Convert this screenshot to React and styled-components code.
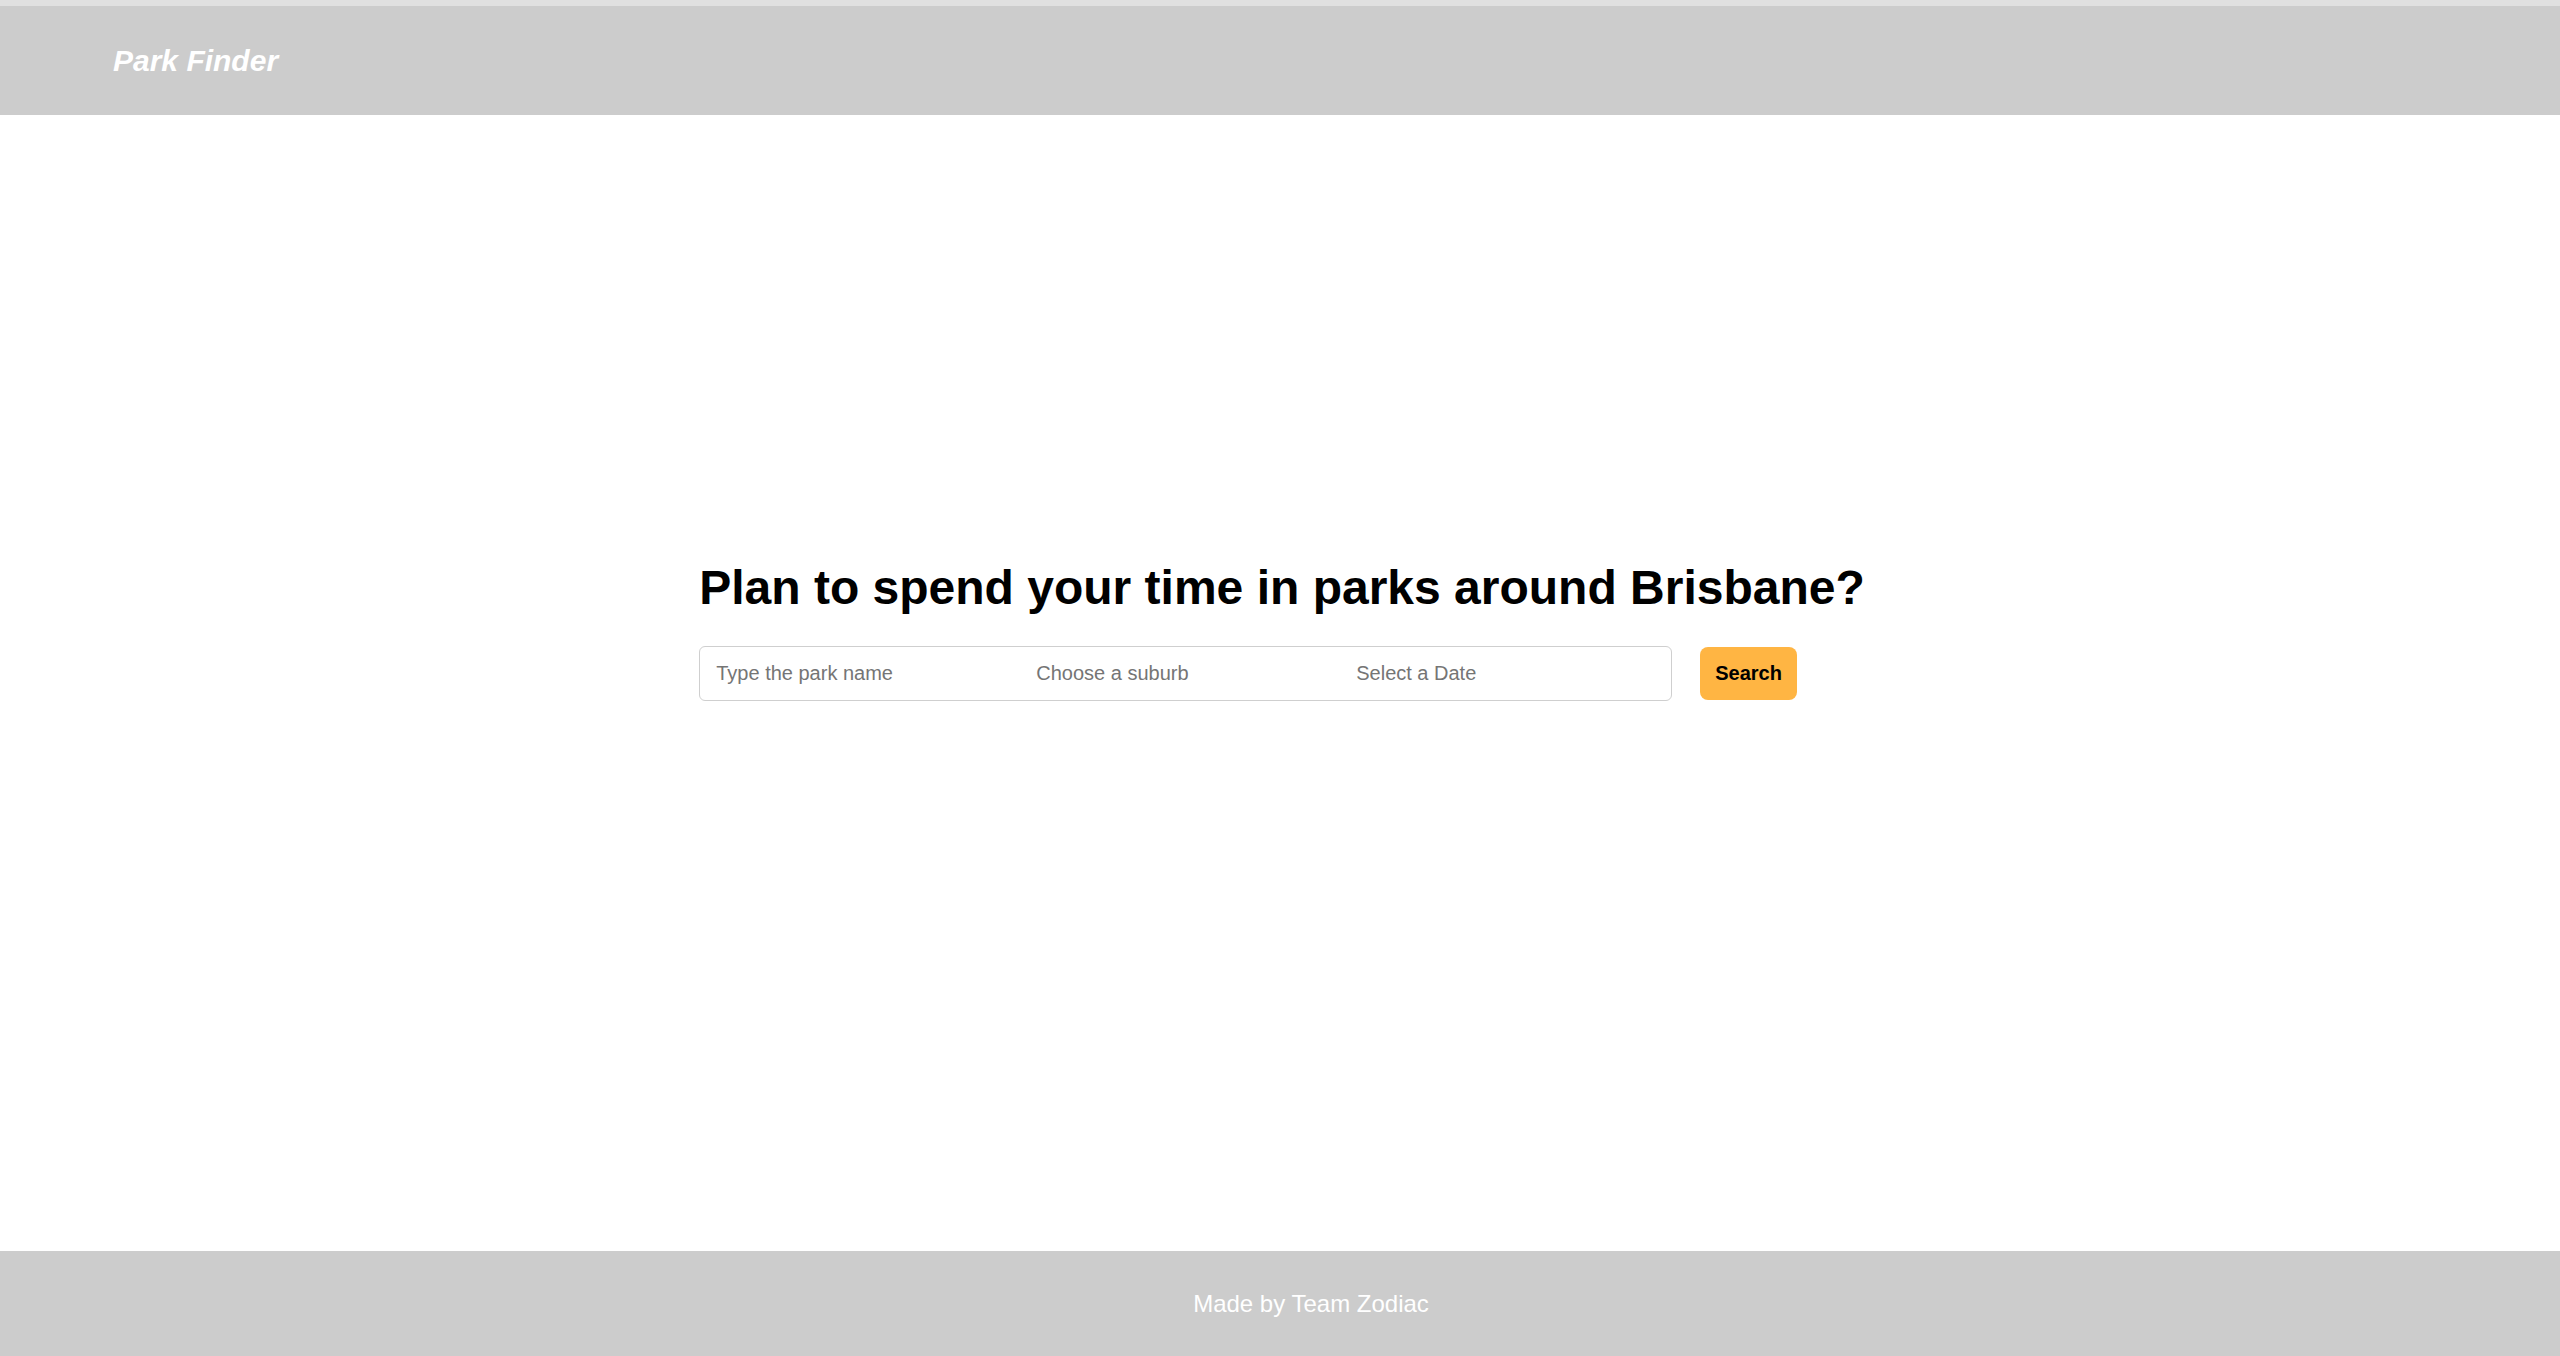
import React, { useState } from 'react';
import styled, { createGlobalStyle } from 'styled-components';

const GlobalStyle = createGlobalStyle`
    html, body {
        margin: 0;
        padding: 0;
        background: #fff;
        font-family: "Liberation Sans", Arial, sans-serif;
    }
    * {
        box-sizing: border-box;
    }
`;

const Page = styled.div`
    min-height: 100vh;
    display: flex;
    flex-direction: column;
    border-top: 6px solid #e0e0e0;
`;

const Header = styled.header`
    height: 109px;
    background: #cccccc;
    display: flex;
    align-items: center;
    padding-left: 113px;
`;

const Brand = styled.h1`
    margin: 0;
    color: #fff;
    font-size: 30px;
    font-weight: bold;
    font-style: italic;
`;

const Main = styled.main`
    flex: 1;
    display: flex;
    align-items: center;
    justify-content: center;
    padding-bottom: 105px;
    padding-left: 4px;
`;

const Hero = styled.section`
    display: flex;
    flex-direction: column;
    align-items: flex-start;
    gap: 31px;
`;

const Title = styled.h2`
    margin: 0;
    color: #000;
    font-size: 48px;
    font-weight: bold;
    line-height: 55px;
`;

const SearchRow = styled.form`
    display: flex;
    align-items: center;
    gap: 28px;
`;

const SearchBox = styled.div`
    display: flex;
    width: 973px;
    height: 55px;
    border: 1px solid #cfcfcf;
    border-radius: 6px;
    background: #fff;
    overflow: hidden;
`;

const Field = styled.input`
    width: 320px;
    height: 100%;
    border: none;
    outline: none;
    padding: 0 0 0 16px;
    font-family: "Liberation Sans", Arial, sans-serif;
    font-size: 20px;
    color: #333;
    background: transparent;

    &::placeholder {
        color: #757575;
    }
`;

const SearchButton = styled.button`
    height: 53px;
    padding: 0 15px;
    border: none;
    border-radius: 8px;
    background: #ffb543;
    color: #000;
    font-family: "Liberation Sans", Arial, sans-serif;
    font-size: 20px;
    font-weight: bold;
    cursor: pointer;
`;

const Footer = styled.footer`
    height: 105px;
    background: #cccccc;
    display: flex;
    align-items: center;
    justify-content: center;
    padding-left: 62px;
    color: #fff;
    font-size: 24px;
`;

const App = () => {
    const [park, setPark] = useState('');
    const [suburb, setSuburb] = useState('');
    const [date, setDate] = useState('');

    const handleSubmit = (e) => {
        e.preventDefault();
    };

    return (
        <Page>
            <GlobalStyle />
            <Header>
                <Brand>Park Finder</Brand>
            </Header>
            <Main>
                <Hero>
                    <Title>Plan to spend your time in parks around Brisbane?</Title>
                    <SearchRow onSubmit={handleSubmit}>
                        <SearchBox>
                            <Field
                                placeholder="Type the park name"
                                value={park}
                                onChange={(e) => setPark(e.target.value)}
                            />
                            <Field
                                placeholder="Choose a suburb"
                                value={suburb}
                                onChange={(e) => setSuburb(e.target.value)}
                            />
                            <Field
                                placeholder="Select a Date"
                                value={date}
                                onChange={(e) => setDate(e.target.value)}
                            />
                        </SearchBox>
                        <SearchButton type="submit">Search</SearchButton>
                    </SearchRow>
                </Hero>
            </Main>
            <Footer>Made by Team Zodiac</Footer>
        </Page>
    );
};

export default App;
